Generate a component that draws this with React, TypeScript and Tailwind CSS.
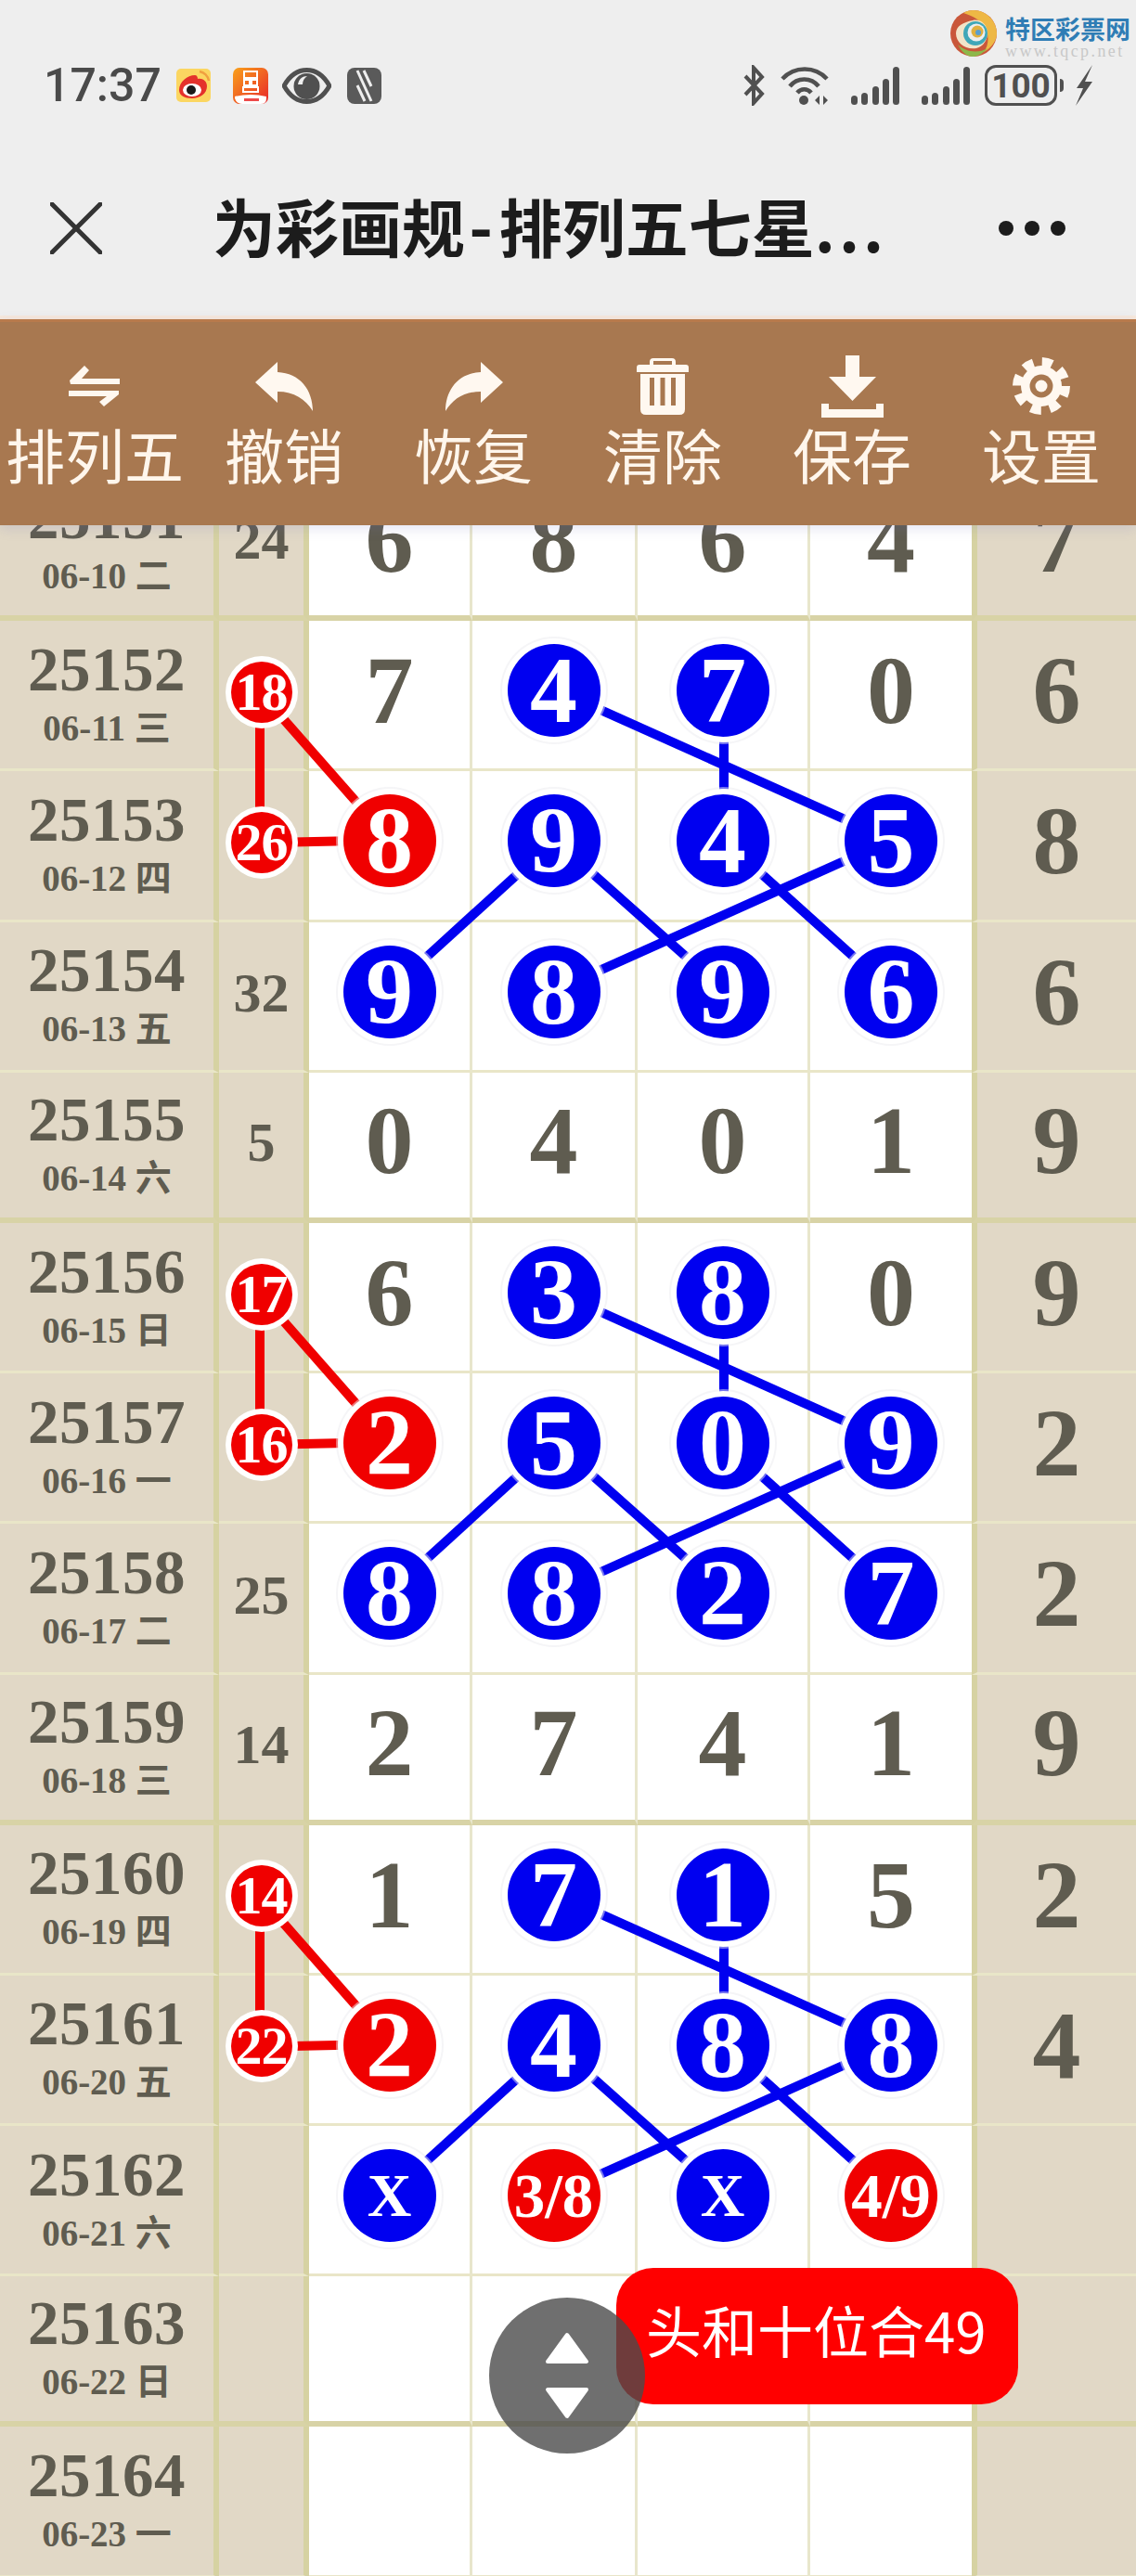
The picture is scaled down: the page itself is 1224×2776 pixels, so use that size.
import React from 'react';

type Ball = { v: string; c: 'r' | 'b' };
type Cell = string | Ball;

interface Row {
  no: string;
  date: string;
  sum: Cell;
  nums: Cell[];
  last: string;
  thick?: boolean;
}

const r = (v: string): Ball => ({ v, c: 'r' });
const b = (v: string): Ball => ({ v, c: 'b' });

const rows: Row[] = [
  { no: '25151', date: '06-10 二', sum: '24', nums: ['6', '8', '6', '4'], last: '7', thick: true },
  { no: '25152', date: '06-11 三', sum: r('18'), nums: ['7', b('4'), b('7'), '0'], last: '6' },
  { no: '25153', date: '06-12 四', sum: r('26'), nums: [r('8'), b('9'), b('4'), b('5')], last: '8' },
  { no: '25154', date: '06-13 五', sum: '32', nums: [b('9'), b('8'), b('9'), b('6')], last: '6' },
  { no: '25155', date: '06-14 六', sum: '5', nums: ['0', '4', '0', '1'], last: '9', thick: true },
  { no: '25156', date: '06-15 日', sum: r('17'), nums: ['6', b('3'), b('8'), '0'], last: '9' },
  { no: '25157', date: '06-16 一', sum: r('16'), nums: [r('2'), b('5'), b('0'), b('9')], last: '2' },
  { no: '25158', date: '06-17 二', sum: '25', nums: [b('8'), b('8'), b('2'), b('7')], last: '2' },
  { no: '25159', date: '06-18 三', sum: '14', nums: ['2', '7', '4', '1'], last: '9', thick: true },
  { no: '25160', date: '06-19 四', sum: r('14'), nums: ['1', b('7'), b('1'), '5'], last: '2' },
  { no: '25161', date: '06-20 五', sum: r('22'), nums: [r('2'), b('4'), b('8'), b('8')], last: '4' },
  { no: '25162', date: '06-21 六', sum: '', nums: [b('X'), r('3/8'), b('X'), r('4/9')], last: '' },
  { no: '25163', date: '06-22 日', sum: '', nums: ['', '', '', ''], last: '', thick: true },
  { no: '25164', date: '06-23 一', sum: '', nums: ['', '', '', ''], last: '' },
];

const ROW_H = 162.2;
const X = [280, 420, 598, 780, 960];
const rowY = (i: number) => 236 + (i - 1) * ROW_H;

// the connecting lines of one group, first row index i
function GroupLines({ i }: { i: number }) {
  const y0 = rowY(i);
  const y1 = rowY(i + 1);
  const y2 = rowY(i + 2);
  return (
    <>
      <g stroke="#f00000" strokeWidth="10">
        <line x1={X[0]} y1={y0 + 3} x2={X[0]} y2={y1 + 3} />
        <line x1={X[0]} y1={y0 + 3} x2={X[1]} y2={y1} />
        <line x1={X[0]} y1={y1 + 3} x2={X[1]} y2={y1} />
      </g>
      <g stroke="#0000f0" strokeWidth="10">
        <line x1={X[2]} y1={y0} x2={X[4]} y2={y1} />
        <line x1={X[3]} y1={y0} x2={X[3]} y2={y1} />
        <line x1={X[2]} y1={y1} x2={X[1]} y2={y2} />
        <line x1={X[2]} y1={y1} x2={X[3]} y2={y2} />
        <line x1={X[3]} y1={y1} x2={X[4]} y2={y2} />
        <line x1={X[4]} y1={y1} x2={X[2]} y2={y2} />
      </g>
    </>
  );
}

function BallView({ ball, small }: { ball: Ball; small?: boolean }) {
  const bg = ball.c === 'r' ? 'bg-[#f00000]' : 'bg-[#0000f0]';
  if (small) {
    return (
      <div className={`relative z-20 flex size-[66px] items-center justify-center rounded-full text-[58px] leading-none text-white ring-[6px] ring-white ${bg}`}>
        <span className="tracking-[-1px]">{ball.v}</span>
      </div>
    );
  }
  let textSize = 'text-[102px]';
  if (ball.v === 'X') textSize = 'text-[66px]';
  if (ball.v.includes('/')) textSize = 'text-[67px]';
  return (
    <div className={`relative z-20 flex size-[100px] items-center justify-center rounded-full leading-none text-white ring-[6px] ring-white shadow-[0_0_0_8px_rgba(235,235,240,0.5)] ${bg} ${textSize}`}>
      {ball.v}
    </div>
  );
}

function ChartRow({ row }: { row: Row }) {
  const line = row.thick ? 'border-b-[6px] border-b-[#d8d3a6]' : 'border-b-[3px] border-b-[#e9e6c8]';
  const sand = 'bg-[#e1d8c6]';
  return (
    <div className="grid h-[162.2px] grid-cols-[236px_97px_176px_178px_186px_174px_177px] font-['Liberation_Serif','Noto_Sans_CJK_SC',serif] font-bold text-[#5f5c50]">
      <div className={`flex flex-col items-center justify-center border-r-[6px] border-r-[#d6d2a2] pb-[6px] ${sand} ${line}`}>
        <div className="text-[67px] leading-[66px] tracking-[0.5px]">{row.no}</div>
        <div className="mt-[11px] text-[39px] leading-[39px]">{row.date}</div>
      </div>
      <div className={`flex items-center justify-center border-r-[6px] border-r-[#d6d2a2] pb-[6px] ${sand} ${line}`}>
        {typeof row.sum === 'string' ? (
          <span className="text-[60px] leading-none">{row.sum}</span>
        ) : (
          <BallView ball={row.sum} small />
        )}
      </div>
      {row.nums.map((n, idx) => (
        <div
          key={idx}
          className={`flex items-center justify-center bg-white pb-[9px] ${idx < 3 ? 'border-r-[3px] border-r-[#e8e6cc]' : ''} ${line}`}
        >
          {typeof n === 'string' ? <span className="text-[104px] leading-none">{n}</span> : <BallView ball={n} />}
        </div>
      ))}
      <div className={`flex items-center justify-center border-l-[6px] border-l-[#d6d2a2] pb-[9px] ${sand} ${line}`}>
        <span className="text-[104px] leading-none">{row.last}</span>
      </div>
    </div>
  );
}

function SwapIcon() {
  return (
    <svg width="56" height="44" viewBox="0 0 56 44" fill="#fff8f0">
      <path d="M17 0 L22 5 L14 14 H55 V20 H2 L1 16 Z" />
      <path d="M0 27 H54 V31 L38 44 L33 39 L41 33 H0 Z" />
    </svg>
  );
}

function UndoIcon({ flip }: { flip?: boolean }) {
  return (
    <svg width="63" height="53" viewBox="0 0 63 53" fill="#fff8f0" className={flip ? '-scale-x-100' : ''}>
      <path d="M0 22 L24 0 V11 C48 12 62 30 62 53 C54 40 42 32 24 32 V44 Z" />
    </svg>
  );
}

function TrashIcon() {
  return (
    <svg width="56" height="62" viewBox="0 0 56 62">
      <path fill="#fff8f0" d="M18 1 H38 Q42 1 42 5 V8 H53 Q56 8 56 11 V16 H0 V11 Q0 8 3 8 H14 V5 Q14 1 18 1 Z" />
      <rect x="18" y="4" width="20" height="4" fill="#a87850" />
      <path fill="#fff8f0" d="M4 18 H52 V56 Q52 62 46 62 H10 Q4 62 4 56 Z" />
      <rect x="14" y="22" width="5" height="30" fill="#a87850" />
      <rect x="25.5" y="22" width="5" height="30" fill="#a87850" />
      <rect x="37" y="22" width="5" height="30" fill="#a87850" />
    </svg>
  );
}

function DownloadIcon() {
  return (
    <svg width="67" height="67" viewBox="0 0 67 67" fill="#fff8f0">
      <path d="M26 0 H41 V23 H59 L33.5 49 L8 23 H26 Z" />
      <path d="M0 52 H8 V58 H59 V52 H67 V67 H0 Z" />
    </svg>
  );
}

function GearIcon() {
  return (
    <svg width="62" height="62" viewBox="0 0 62 62">
      <circle cx="31" cy="31" r="22" fill="#fff8f0" />
      <circle cx="31" cy="31" r="26" fill="none" stroke="#fff8f0" strokeWidth="10" strokeDasharray="11 9.42" />
      <circle cx="31" cy="31" r="12.5" fill="#a87850" />
      <circle cx="31" cy="31" r="6.5" fill="#fff8f0" />
    </svg>
  );
}

const tools = [
  { label: '排列五', icon: <SwapIcon /> },
  { label: '撤销', icon: <UndoIcon /> },
  { label: '恢复', icon: <UndoIcon flip /> },
  { label: '清除', icon: <TrashIcon /> },
  { label: '保存', icon: <DownloadIcon /> },
  { label: '设置', icon: <GearIcon /> },
];

function WeiboIcon() {
  return (
    <svg width="37" height="36" viewBox="0 0 37 36">
      <rect width="37" height="36" rx="5" fill="#fbd661" />
      <path d="M3 23 C3 14 12 7 20 7 C22 7 23 9 23 11 C28 10 33 13 33 19 C33 27 25 32 17 32 C9 32 3 29 3 23 Z" fill="#e4312b" />
      <ellipse cx="17" cy="23" rx="10" ry="7" fill="#fff" />
      <circle cx="16" cy="23" r="5" fill="#1a1a1a" />
      <path d="M25 3 C30 4 34 8 35 13" stroke="#f0a040" strokeWidth="2.5" fill="none" />
    </svg>
  );
}

function RedAppIcon() {
  return (
    <svg width="38" height="39" viewBox="0 0 38 39">
      <defs>
        <linearGradient id="appGrad" x1="0" y1="0" x2="1" y2="1">
          <stop offset="0" stopColor="#f9a11b" />
          <stop offset="1" stopColor="#e8262a" />
        </linearGradient>
      </defs>
      <rect width="38" height="39" rx="7" fill="url(#appGrad)" />
      <g fill="none" stroke="#fff" strokeWidth="2">
        <rect x="12" y="4" width="14" height="7" />
        <rect x="12" y="13" width="6" height="6" />
        <rect x="20" y="13" width="6" height="6" />
        <rect x="11" y="21" width="16" height="5" />
      </g>
      <path d="M2 31 Q19 27 36 31 L36 33 Q36 39 30 39 H10 Q4 39 2 33 Z" fill="#fff" />
      <rect x="12" y="33" width="16" height="3" fill="#ee4a4a" />
    </svg>
  );
}

function EyeIcon() {
  return (
    <svg width="53" height="39" viewBox="0 0 53 39">
      <path d="M2 19.5 C9 7 17 2.5 26.5 2.5 C36 2.5 44 7 51 19.5 C44 32 36 36.5 26.5 36.5 C17 36.5 9 32 2 19.5 Z" fill="none" stroke="#505050" strokeWidth="5" />
      <circle cx="26.5" cy="20" r="14" fill="#505050" />
      <path d="M17 18 C18 12 22 9 27 9 C24 11 22 14 22 18 Z" fill="#eee" />
    </svg>
  );
}

function NfcIcon() {
  return (
    <svg width="37" height="39" viewBox="0 0 37 39">
      <rect width="37" height="39" rx="8" fill="#5a5a5a" />
      <path d="M11 3 L26 36 M18 3 L26 20 M11 19 L19 36" fill="none" stroke="#eee" strokeWidth="3" />
    </svg>
  );
}

function BluetoothIcon() {
  return (
    <svg width="26" height="44" viewBox="0 0 26 44" fill="none" stroke="#505050" strokeWidth="4">
      <path d="M3 12 L21 31 L12 41 V3 L21 13 L3 32" />
    </svg>
  );
}

function WifiIcon() {
  return (
    <svg width="54" height="44" viewBox="0 0 54 44" fill="none" stroke="#505050" strokeWidth="4.5">
      <path d="M2 15 C15 1 37 1 50 15" />
      <path d="M10 23 C18 13 33 13 41 23" />
      <path d="M18 30 C22 25 29 25 33 30" />
      <circle cx="25" cy="38" r="5" fill="#505050" stroke="none" />
      <path d="M42 33 L37 38 L42 43 Z M46 33 L51 38 L46 43 Z" fill="#505050" stroke="none" />
    </svg>
  );
}

function SignalIcon() {
  return (
    <div className="flex h-[42px] w-[52px] items-end justify-between">
      {[10, 13, 20, 28, 41].map((h, i) => (
        <div key={i} className="w-[7px] rounded-full bg-[#505050]" style={{ height: h }} />
      ))}
    </div>
  );
}

function BoltIcon() {
  return (
    <svg width="20" height="44" viewBox="0 0 20 44" fill="#505050">
      <path d="M19 0 L2 25 H9 L1 44 L19 18 H11 Z" />
    </svg>
  );
}

function SiteLogo() {
  return (
    <div className="absolute left-[1024px] top-[10px] flex items-start">
      <svg width="50" height="52" viewBox="0 0 50 52">
        <circle cx="25" cy="26" r="25" fill="#c9573a" />
        <path d="M25 1 C38 1 50 12 50 26 C50 34 44 42 36 46 C42 38 42 26 36 18 C32 12 26 8 14 4 C17 2 21 1 25 1 Z" fill="#eeb845" />
        <path d="M8 38 C16 46 30 48 40 42 C34 49 28 51 24 51 C18 51 12 46 8 38 Z" fill="#8db84a" />
        <path d="M6 26 C6 36 16 44 28 42 C36 40 40 32 40 26 C40 16 32 10 24 12 C14 14 6 18 6 26 Z" fill="#f2e4c8" />
        <circle cx="27" cy="26" r="13" fill="#3fa7b8" />
        <circle cx="28" cy="25" r="9.5" fill="#eeeeee" />
        <circle cx="29" cy="24" r="6.5" fill="#e0b040" />
        <circle cx="30" cy="25" r="3" fill="#5a9fd0" />
      </svg>
      <div className="ml-[9px] w-[134px]">
        <div className="mt-[6px] whitespace-nowrap font-['Noto_Sans_CJK_SC',sans-serif] text-[27px] font-bold leading-[29px] text-[#2f7db5]">
          特区彩票网
        </div>
        <div className="mt-[2px] whitespace-nowrap font-['Liberation_Serif',serif] text-[18px] leading-[16px] tracking-[2.4px] text-[#c8c8c8]">
          www.tqcp.net
        </div>
      </div>
    </div>
  );
}

export default function App() {
  return (
    <div className="relative h-[2776px] w-[1224px] overflow-hidden bg-white font-['Noto_Sans_CJK_SC',sans-serif]">
      {/* status bar + title */}
      <div className="relative h-[340px] bg-[#eeeeee]">
        <SiteLogo />
        <div className="flex items-center justify-between pl-[47px] pr-[46px] pt-[70px]">
          <div className="flex items-center">
            <span className="w-[125px] font-['Roboto',sans-serif] text-[50px] font-medium leading-[40px] text-[#4a4a4a]">17:37</span>
            <div className="ml-[18px]"><WeiboIcon /></div>
            <div className="ml-[24px]"><RedAppIcon /></div>
            <div className="ml-[15px]"><EyeIcon /></div>
            <div className="ml-[17px]"><NfcIcon /></div>
          </div>
          <div className="flex items-center">
            <BluetoothIcon />
            <div className="ml-[15px]"><WifiIcon /></div>
            <div className="ml-[22px]"><SignalIcon /></div>
            <div className="ml-[24px]"><SignalIcon /></div>
            <div className="ml-[16px] flex h-[44px] w-[78px] items-center justify-center rounded-[12px] border-[3px] border-[#505050] font-['Roboto',sans-serif] text-[37px] font-bold leading-none text-[#505050]">
              100
            </div>
            <div className="ml-[3px] h-[14px] w-[4px] rounded-r-full bg-[#505050]" />
            <div className="ml-[12px]"><BoltIcon /></div>
          </div>
        </div>
        <div className="mt-[82px] flex h-[100px] items-center pl-[54px] pr-[76px]">
          <svg width="56" height="56" viewBox="0 0 56 56" stroke="#333" strokeWidth="5" strokeLinecap="round">
            <line x1="2" y1="2" x2="54" y2="54" />
            <line x1="54" y1="2" x2="2" y2="54" />
          </svg>
          <div className="ml-[119px] flex-1 whitespace-nowrap text-[68px] font-bold leading-none text-[#1c1c1c]">
            为彩画规<span className="ml-[4px] mr-[6px] font-['Roboto',sans-serif]">-</span>排列五七星<span className="tracking-[4px]">...</span>
          </div>
          <div className="flex gap-[12px]">
            <div className="size-[16px] rounded-full bg-[#1c1c1c]" />
            <div className="size-[16px] rounded-full bg-[#1c1c1c]" />
            <div className="size-[16px] rounded-full bg-[#1c1c1c]" />
          </div>
        </div>
      </div>
      <div className="h-[4px] bg-[#f6e8dc]" />

      {/* toolbar */}
      <div className="relative z-30 grid h-[222px] grid-cols-6 border-t-[3px] border-[#b87a4c] bg-[#a87850] pt-[36px] shadow-[0_4px_12px_rgba(110,110,190,0.18)]">
        {tools.map((t) => (
          <div key={t.label} className="flex flex-col items-center">
            <div className="flex h-[66px] items-center justify-center">{t.icon}</div>
            <div className="mt-[7px] whitespace-nowrap text-[64px] leading-none text-[#fff6ec]">{t.label}</div>
          </div>
        ))}
      </div>

      {/* chart */}
      <div className="h-[2210px] overflow-hidden">
        <div className="relative -mt-[59px]">
          {rows.map((row) => (
            <ChartRow key={row.no} row={row} />
          ))}
          <svg className="absolute left-0 top-0 z-10" width="1224" height="2300" viewBox="0 0 1224 2300">
            <GroupLines i={1} />
            <GroupLines i={5} />
            <GroupLines i={9} />
          </svg>
        </div>
      </div>

      {/* floating controls */}
      <div className="absolute left-[664px] top-[2444px] z-40 h-[147px] w-[433px] whitespace-nowrap rounded-[40px] bg-[#ff0000] pl-[32px] pt-[36px] text-[60px] leading-[60px] text-white">
        头和十位合49
      </div>
      <div className="absolute left-[527px] top-[2476px] z-40 flex size-[168px] flex-col items-center justify-center rounded-full bg-[rgba(75,75,75,0.8)]">
        <svg width="48" height="94" viewBox="0 0 48 94" fill="#fff" stroke="#fff" strokeWidth="4" strokeLinejoin="round">
          <path d="M24 3 L45 32 H3 Z" />
          <path d="M3 62 H45 L24 91 Z" />
        </svg>
      </div>
    </div>
  );
}
